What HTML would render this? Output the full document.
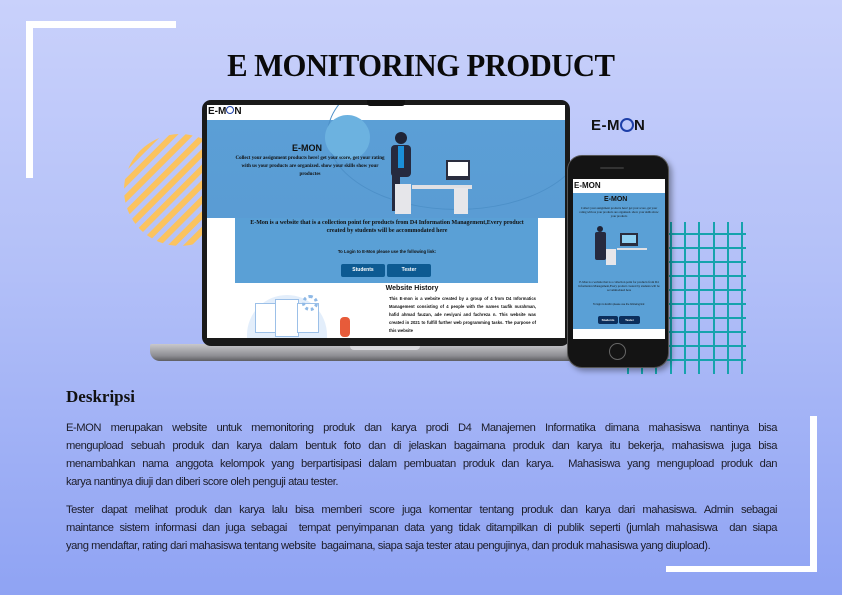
<!DOCTYPE html>
<html><head><meta charset="utf-8"><style>
*{margin:0;padding:0;box-sizing:border-box}
body{width:842px;height:595px;overflow:hidden;position:relative;background:linear-gradient(180deg,#c9d1fb 0%,#b3c0f8 45%,#8fa3f3 100%);font-family:"Liberation Sans",sans-serif}
.abs{position:absolute}
.w{background:#fff}
.title{left:0;width:842px;top:47px;text-align:center;font-family:"Liberation Serif",serif;font-weight:bold;font-size:32px;letter-spacing:-0.6px;color:#0a0a0a}
.title span{display:inline-block;transform:scaleX(0.96)}
.desc{left:66px;top:387px;font-family:"Liberation Serif",serif;font-weight:bold;font-size:17px;color:#111}
.txt{left:66px;width:711px;font-size:11.2px;color:#1c1c28;line-height:18px;letter-spacing:-0.45px}
.txt div{text-align:justify;text-align-last:justify;white-space:nowrap;overflow:visible}
.txt div.l{text-align-last:left}
.logo{font-weight:bold;font-family:"Liberation Sans",sans-serif;color:#111}
.btn{background:#0d5a92;color:#fff;font-size:5px;text-align:center;border-radius:2px;font-weight:bold}
</style></head><body>
<div class="abs w" style="left:26px;top:21px;width:150px;height:7px"></div>
<div class="abs w" style="left:26px;top:21px;width:7px;height:157px"></div>
<div class="abs w" style="left:810px;top:416px;width:7px;height:156px"></div>
<div class="abs w" style="left:666px;top:566px;width:151px;height:6px"></div>

<div class="abs title"><span>E MONITORING PRODUCT</span></div>

<svg class="abs" style="left:120px;top:122px" width="120" height="150">
<defs><clipPath id="c"><circle cx="60" cy="68" r="56"/></clipPath>
<pattern id="p" width="11" height="11" patternUnits="userSpaceOnUse" patternTransform="rotate(45)"><rect width="6" height="11" fill="#fbc35f"/></pattern></defs>
<rect width="120" height="150" fill="url(#p)" clip-path="url(#c)"/>
</svg>

<svg class="abs" style="left:626px;top:220px" width="120" height="154">
<g stroke="#16a3ad" stroke-width="2">
<line x1="45" y1="2" x2="45" y2="154"/><line x1="59" y1="2" x2="59" y2="154"/><line x1="73" y1="2" x2="73" y2="154"/><line x1="88" y1="2" x2="88" y2="154"/><line x1="102" y1="2" x2="102" y2="154"/><line x1="116" y1="2" x2="116" y2="154"/>
<line x1="2" y1="130" x2="2" y2="154"/><line x1="16" y1="130" x2="16" y2="154"/><line x1="30" y1="130" x2="30" y2="154"/>
<line x1="40" y1="14" x2="120" y2="14"/><line x1="40" y1="28" x2="120" y2="28"/><line x1="40" y1="42" x2="120" y2="42"/><line x1="40" y1="56" x2="120" y2="56"/><line x1="40" y1="70" x2="120" y2="70"/><line x1="40" y1="84" x2="120" y2="84"/><line x1="40" y1="98" x2="120" y2="98"/><line x1="40" y1="112" x2="120" y2="112"/><line x1="0" y1="126" x2="120" y2="126"/><line x1="0" y1="140" x2="120" y2="140"/>
</g></svg>

<div class="abs logo" style="left:591px;top:117px;font-size:15px;letter-spacing:0.5px">E-M<span style="display:inline-block;width:14px;height:14px;border:2px solid #1d3fa8;border-radius:50%;vertical-align:-2px"></span>N</div>

<div class="abs" style="left:150px;top:344px;width:440px;height:17px;background:linear-gradient(180deg,#c8c8cc,#8d8d92 70%,#5e5e62);border-radius:2px 2px 10px 10px"></div>
<div class="abs" style="left:350px;top:345px;width:70px;height:5px;background:#d8d8dc;border-radius:0 0 4px 4px"></div>
<div class="abs" style="left:202px;top:100px;width:368px;height:246px;background:#1a1a1a;border-radius:9px"></div>
<div class="abs" style="left:207px;top:105px;width:358px;height:233px;background:#fff;overflow:hidden">
  <div class="abs logo" style="left:1px;top:1px;font-size:10px">E-M<span style="display:inline-block;width:8px;height:8px;border:1.5px solid #1d3fa8;border-radius:50%"></span>N</div>
  <div class="abs" style="left:0;top:15px;width:358px;height:98px;background:linear-gradient(180deg,#5b9fd6,#5a9cd4)"></div>
  <div class="abs" style="left:120px;top:-45px;width:260px;height:150px;border-radius:50%;border:1px solid #4d90c8"></div>
  <div class="abs" style="left:118px;top:10px;width:45px;height:45px;border-radius:50%;background:#6cb2e0"></div>
  <div class="abs logo" style="left:85px;top:38px;font-size:9px">E-MON</div>
  <div class="abs" style="left:28px;top:50px;width:150px;font-family:'Liberation Serif',serif;font-size:5px;line-height:8px;text-align:center;color:#111;font-weight:bold">Collect your assignment products here! get your score, get your rating with us your products are organized. show your skills show your productes</div>
  <div class="abs" style="left:188px;top:27px;width:12px;height:12px;border-radius:50%;background:#1f2437"></div>
  <div class="abs" style="left:184px;top:40px;width:20px;height:32px;background:#262a3f;border-radius:4px"></div>
  <div class="abs" style="left:191px;top:41px;width:6px;height:22px;background:#1b8fd8"></div>
  <div class="abs" style="left:185px;top:70px;width:8px;height:36px;background:#262a3f"></div>
  <div class="abs" style="left:188px;top:79px;width:16px;height:30px;background:#e6e6ea"></div>
  <div class="abs" style="left:205px;top:80px;width:60px;height:4px;background:#e0e0e4"></div>
  <div class="abs" style="left:247px;top:83px;width:14px;height:26px;background:#e6e6ea"></div>
  <div class="abs" style="left:239px;top:55px;width:24px;height:20px;background:#2a2d3e;border:2px solid #2a2d3e"></div>
  <div class="abs" style="left:241px;top:57px;width:20px;height:14px;background:#fff"></div>
  <div class="abs" style="left:28px;top:113px;width:303px;height:65px;background:#5aa0d6"></div>
  <div class="abs" style="left:40px;top:114px;width:280px;font-family:'Liberation Serif',serif;font-weight:bold;font-size:6px;line-height:8px;text-align:center;color:#111">E-Mon is a website that is a collection point for products from D4 Information Management,Every product created by students will be accommodated here</div>
  <div class="abs" style="left:40px;top:144px;width:280px;font-size:4.3px;text-align:center;color:#111;font-weight:bold">To Login to E-Mon please use the following link:</div>
  <div class="abs btn" style="left:134px;top:159px;width:44px;height:13px;line-height:13px">Students</div>
  <div class="abs btn" style="left:180px;top:159px;width:44px;height:13px;line-height:13px">Tester</div>
  <div class="abs" style="left:40px;top:190px;width:80px;height:45px;border-radius:40px 40px 0 0;background:#e3eefb"></div>
  <div class="abs" style="left:48px;top:198px;width:22px;height:30px;background:#fff;border:1px solid #9cc0e8"></div>
  <div class="abs" style="left:68px;top:194px;width:24px;height:38px;background:#fff;border:1px solid #9cc0e8"></div>
  <div class="abs" style="left:90px;top:198px;width:22px;height:30px;background:#fff;border:1px solid #9cc0e8"></div>
  <div class="abs" style="left:95px;top:190px;width:16px;height:16px;border-radius:50%;border:3px dotted #8fb9e6"></div>
  <div class="abs" style="left:133px;top:212px;width:10px;height:20px;background:#e75b3a;border-radius:4px"></div>
  <div class="abs" style="left:155px;top:180px;width:100px;text-align:center;font-weight:bold;font-size:7px;color:#111">Website History</div>
  <div class="abs" style="left:182px;top:190px;width:147px;font-size:4.2px;line-height:8px;text-align:justify;color:#111;font-weight:bold">This E-mon is a website created by a group of 4 from D4 Informatics Management consisting of 4 people with the names taufik nurahman, hafid ahmad fauzan, ade neviyani and fachreza n. This website was created in 2021 to fulfill further web programming tasks. The purpose of this website</div>
</div>
<div class="abs" style="left:367px;top:100px;width:38px;height:6px;background:#111;border-radius:0 0 3px 3px"></div>

<div class="abs" style="left:567px;top:155px;width:102px;height:213px;background:#141414;border-radius:15px;box-shadow:3px 3px 6px rgba(0,0,0,.35);border:1px solid #555"></div>
<div class="abs" style="left:600px;top:167px;width:24px;height:2px;background:#333;border-radius:1px"></div>
<div class="abs" style="left:573px;top:179px;width:92px;height:160px;background:#fff;overflow:hidden">
  <div class="abs logo" style="left:1px;top:2px;font-size:8px">E-MON</div>
  <div class="abs" style="left:0;top:14px;width:92px;height:136px;background:#5aa0d6"></div>
  <div class="abs logo" style="left:31px;top:17px;font-size:7px">E-MON</div>
  <div class="abs" style="left:4px;top:27px;width:84px;font-family:'Liberation Serif',serif;font-size:3px;line-height:4px;text-align:center;color:#111">Collect your assignment products here! get your score, get your rating with us your products are organized. show your skills show your products</div>
  <div class="abs" style="left:24px;top:47px;width:6px;height:6px;border-radius:50%;background:#1f2437"></div>
  <div class="abs" style="left:22px;top:53px;width:11px;height:28px;background:#262a3f;border-radius:2px"></div>
  <div class="abs" style="left:33px;top:70px;width:10px;height:16px;background:#e6e6ea"></div>
  <div class="abs" style="left:44px;top:69px;width:30px;height:2px;background:#e0e0e4"></div>
  <div class="abs" style="left:47px;top:54px;width:18px;height:13px;background:#2a2d3e"></div>
  <div class="abs" style="left:49px;top:56px;width:14px;height:8px;background:#8fd0f2"></div>
  <div class="abs" style="left:4px;top:101px;width:84px;font-family:'Liberation Serif',serif;font-size:3px;line-height:4px;text-align:center;color:#111">E-Mon is a website that is a collection point for products from D4 Information Management,Every product created by students will be accommodated here</div>
  <div class="abs" style="left:4px;top:124px;width:84px;font-size:2.5px;text-align:center;color:#111">To login to E-Mon please use the following link:</div>
  <div class="abs btn" style="left:25px;top:137px;width:20px;height:8px;line-height:8px;font-size:3px;background:#0b2e5c">Students</div>
  <div class="abs btn" style="left:46px;top:137px;width:21px;height:8px;line-height:8px;font-size:3px;background:#0b2e5c">Tester</div>
</div>
<div class="abs" style="left:609px;top:343px;width:17px;height:17px;border-radius:50%;border:1px solid #666"></div>

<div class="abs desc">Deskripsi</div>
<div class="abs txt" style="top:419px">
<div>E-MON merupakan website untuk memonitoring produk dan karya prodi D4 Manajemen Informatika dimana mahasiswa nantinya bisa</div>
<div>mengupload sebuah produk dan karya dalam bentuk foto dan di jelaskan bagaimana produk dan karya itu bekerja, mahasiswa juga bisa</div>
<div>menambahkan nama anggota kelompok yang berpartisipasi dalam pembuatan produk dan karya.&nbsp; Mahasiswa yang mengupload produk dan</div>
<div class="l">karya nantinya diuji dan diberi score oleh penguji atau tester.</div>
</div>
<div class="abs txt" style="top:501px">
<div>Tester dapat melihat produk dan karya lalu bisa memberi score juga komentar tentang produk dan karya dari mahasiswa. Admin sebagai</div>
<div>maintance sistem informasi dan juga sebagai&nbsp; tempat penyimpanan data yang tidak ditampilkan di publik seperti (jumlah mahasiswa&nbsp; dan siapa</div>
<div class="l">yang mendaftar, rating dari mahasiswa tentang website&nbsp; bagaimana, siapa saja tester atau pengujinya, dan produk mahasiswa yang diupload).</div>
</div>
</body></html>
